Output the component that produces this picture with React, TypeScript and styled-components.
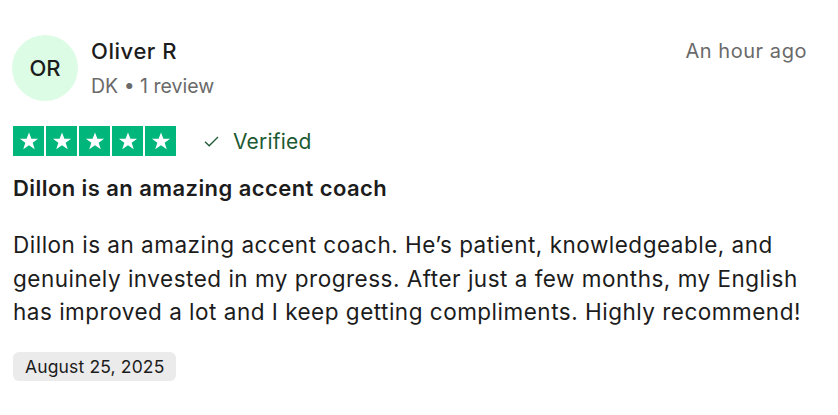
import React from "react";
import styled, { createGlobalStyle } from "styled-components";

const Global = createGlobalStyle`
  html, body { margin: 0; padding: 0; background: #ffffff; }
  body { font-family: Inter, "Noto Sans", "Liberation Sans", sans-serif; }
`;

const Card = styled.article`
  width: 838px;
  box-sizing: border-box;
  padding: 35px 31px 0 13px;
  color: #1c1c1c;
`;

const Header = styled.header`
  display: flex;
  align-items: flex-start;
`;

const Avatar = styled.div`
  width: 66px;
  height: 66px;
  border-radius: 50%;
  background: #dcfce5;
  display: flex;
  align-items: center;
  justify-content: center;
  font-size: 22px;
  font-weight: 500;
  color: #1c1c1c;
  flex-shrink: 0;
  margin-left: -1px;
`;

const Who = styled.div`
  display: flex;
  flex-direction: column;
  margin-left: 13px;
  flex: 1;
`;

const Name = styled.div`
  font-size: 22px;
  font-weight: 500;
  line-height: 28px;
  margin-top: 2px;
  letter-spacing: 0.55px;
`;

const Meta = styled.div`
  font-size: 19.5px;
  color: #6a6a6a;
  line-height: 26px;
  margin-top: 8px;
`;

const Time = styled.time`
  font-size: 20px;
  color: #6a6a6a;
  line-height: 28px;
  margin-top: 2px;
  letter-spacing: 0.55px;
`;

const RatingRow = styled.div`
  display: flex;
  align-items: center;
  margin-top: 25px;
`;

const Stars = styled.div`
  display: flex;
  gap: 2px;
`;

const StarBox = styled.div`
  width: 31px;
  height: 30px;
  background: #00b67a;
  display: flex;
  align-items: center;
  justify-content: center;
`;

const Verified = styled.div`
  display: flex;
  align-items: center;
  margin-left: 28px;
  font-size: 21px;
  color: #1d5a33;
  gap: 14px;
  letter-spacing: 0.2px;
`;

const Title = styled.h2`
  margin: 17px 0 0 0;
  font-size: 22px;
  font-weight: 600;
  line-height: 30px;
  letter-spacing: 0.43px;
`;

const Body = styled.p`
  margin: 25px 0 0 0;
  font-size: 22.5px;
  line-height: 33.5px;
  letter-spacing: 0.5px;
`;

const DateBadge = styled.div`
  width: fit-content;
  margin-top: 23.5px;
  background: #ebebeb;
  border-radius: 6px;
  padding: 0 12px;
  font-size: 17.5px;
  line-height: 29px;
  color: #1c1c1c;
  letter-spacing: 0.15px;
`;

const Star = () => (
  <svg width="20" height="20" viewBox="0 0 24 24">
    <path
      d="M12 1.8l2.9 7.6h8l-6.5 4.8 2.5 7.8L12 17.1l-6.9 4.9 2.5-7.8L1.1 9.4h8z"
      fill="#ffffff"
    />
  </svg>
);

const Check = () => (
  <svg width="15" height="11" viewBox="0 0 15 11" fill="none">
    <path d="M1 5.8l4.2 4L14 1" stroke="#1d5a33" strokeWidth="1.3" />
  </svg>
);

export default function App() {
  return (
    <>
      <Global />
      <Card>
        <Header>
          <Avatar>OR</Avatar>
          <Who>
            <Name>Oliver R</Name>
            <Meta>DK • 1 review</Meta>
          </Who>
          <Time>An hour ago</Time>
        </Header>
        <RatingRow>
          <Stars>
            {[0, 1, 2, 3, 4].map((i) => (
              <StarBox key={i}>
                <Star />
              </StarBox>
            ))}
          </Stars>
          <Verified>
            <Check />
            Verified
          </Verified>
        </RatingRow>
        <Title>Dillon is an amazing accent coach</Title>
        <Body>
          Dillon is an amazing accent coach. He’s patient, knowledgeable, and
          genuinely invested in my progress. After just a few months, my English
          has improved a lot and I keep getting compliments. Highly recommend!
        </Body>
        <DateBadge>August 25, 2025</DateBadge>
      </Card>
    </>
  );
}
